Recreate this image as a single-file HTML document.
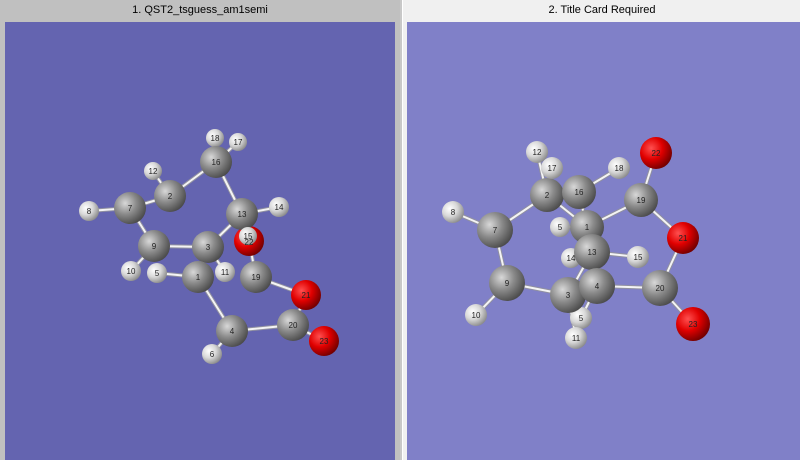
<!DOCTYPE html>
<html><head><meta charset="utf-8"><style>
body{margin:0;width:800px;height:460px;overflow:hidden;background:#c8c8c8;font-family:"Liberation Sans",sans-serif}
#l{position:absolute;left:0;top:0;width:400px;height:460px;background:#c0c0c0}
#r{position:absolute;left:402px;top:0;width:398px;height:460px;background:#f0f0f0;border-left:1px solid #fff}
.t{position:absolute;top:4px;left:0;right:0;text-align:center;font-size:11px;color:#000}
svg{position:absolute;left:0;top:0}
</style></head><body>
<div id="l"><div class="t">1. QST2_tsguess_am1semi</div></div>
<div id="r"><div class="t">2. Title Card Required</div></div>
<svg width="800" height="460" viewBox="0 0 800 460">
<defs>
<radialGradient id="C" cx="35%" cy="35%" r="70%"><stop offset="0" stop-color="#d8d8d8"/><stop offset=".5" stop-color="#8a8a8a"/><stop offset="1" stop-color="#4a4a4a"/></radialGradient>
<radialGradient id="H" cx="35%" cy="35%" r="70%"><stop offset="0" stop-color="#ffffff"/><stop offset=".5" stop-color="#d8d8d8"/><stop offset="1" stop-color="#8a8a8a"/></radialGradient>
<radialGradient id="O" cx="35%" cy="35%" r="70%"><stop offset="0" stop-color="#ff5050"/><stop offset=".5" stop-color="#e00000"/><stop offset="1" stop-color="#700000"/></radialGradient>
</defs>
<rect x="5" y="22" width="390" height="438" fill="#6464b0"/>
<rect x="407" y="22" width="393" height="438" fill="#8080c8"/>
<g stroke-linecap="round">
<g id="bl" stroke="#9090a0" stroke-width="4">
<path d="M216 162L215 138M216 162L238 142M216 162L170 196M216 162L242 214M153 171L170 196M170 196L130 208M130 208L89 211M130 208L154 246M154 246L208 247M154 246L131 271M208 247L242 214M208 247L225 272M242 214L279 207M242 214L248 237M249 241L256 277M256 277L306 295M306 295L293 325M293 325L324 341M293 325L232 331M232 331L198 277M232 331L212 354M198 277L157 273M198 277L208 247M656 153L641 200M641 200L683 238M683 238L660 288M660 288L693 324M660 288L597 286M597 286L568 295M568 295L507 283M507 283L495 230M495 230L547 195M495 230L453 212M507 283L476 315M547 195L537 152M547 195L552 168M547 195L579 192M579 192L619 168M579 192L592 252M587 227L641 200M587 227L560 227M587 227L547 195M592 252L571 258M592 252L638 257M592 252L568 295M568 295L576 338M597 286L581 318"/>
</g>
<g stroke="#f4f4f4" stroke-width="2">
<path d="M216 162L215 138M216 162L238 142M216 162L170 196M216 162L242 214M153 171L170 196M170 196L130 208M130 208L89 211M130 208L154 246M154 246L208 247M154 246L131 271M208 247L242 214M208 247L225 272M242 214L279 207M242 214L248 237M249 241L256 277M256 277L306 295M306 295L293 325M293 325L324 341M293 325L232 331M232 331L198 277M232 331L212 354M198 277L157 273M198 277L208 247M656 153L641 200M641 200L683 238M683 238L660 288M660 288L693 324M660 288L597 286M597 286L568 295M568 295L507 283M507 283L495 230M495 230L547 195M495 230L453 212M507 283L476 315M547 195L537 152M547 195L552 168M547 195L579 192M579 192L619 168M579 192L592 252M587 227L641 200M587 227L560 227M587 227L547 195M592 252L571 258M592 252L638 257M592 252L568 295M568 295L576 338M597 286L581 318"/>
</g>
</g>
<g font-size="8" fill="#222" text-anchor="middle" font-family="Liberation Sans,sans-serif">
<circle cx="215" cy="138" r="9" fill="url(#H)"/><text x="215" y="141">18</text>
<circle cx="238" cy="142" r="9" fill="url(#H)"/><text x="238" y="145">17</text>
<circle cx="216" cy="162" r="16" fill="url(#C)"/><text x="216" y="165">16</text>
<circle cx="153" cy="171" r="9" fill="url(#H)"/><text x="153" y="174">12</text>
<circle cx="170" cy="196" r="16" fill="url(#C)"/><text x="170" y="199">2</text>
<circle cx="130" cy="208" r="16" fill="url(#C)"/><text x="130" y="211">7</text>
<circle cx="89" cy="211" r="10" fill="url(#H)"/><text x="89" y="214">8</text>
<circle cx="279" cy="207" r="10" fill="url(#H)"/><text x="279" y="210">14</text>
<circle cx="249" cy="241" r="15" fill="url(#O)"/>
<circle cx="242" cy="214" r="16" fill="url(#C)"/><text x="242" y="217">13</text>
<circle cx="248" cy="236" r="9" fill="url(#H)"/><text x="248" y="239">15</text><text x="249" y="245">22</text>
<circle cx="154" cy="246" r="16" fill="url(#C)"/><text x="154" y="249">9</text>
<circle cx="208" cy="247" r="16" fill="url(#C)"/><text x="208" y="250">3</text>
<circle cx="131" cy="271" r="10" fill="url(#H)"/><text x="131" y="274">10</text>
<circle cx="157" cy="273" r="10" fill="url(#H)"/><text x="157" y="276">5</text>
<circle cx="198" cy="277" r="16" fill="url(#C)"/><text x="198" y="280">1</text>
<circle cx="225" cy="272" r="10" fill="url(#H)"/><text x="225" y="275">11</text>
<circle cx="256" cy="277" r="16" fill="url(#C)"/><text x="256" y="280">19</text>
<circle cx="306" cy="295" r="15" fill="url(#O)"/><text x="306" y="298">21</text>
<circle cx="293" cy="325" r="16" fill="url(#C)"/><text x="293" y="328">20</text>
<circle cx="232" cy="331" r="16" fill="url(#C)"/><text x="232" y="334">4</text>
<circle cx="324" cy="341" r="15" fill="url(#O)"/><text x="324" y="344">23</text>
<circle cx="212" cy="354" r="10" fill="url(#H)"/><text x="212" y="357">6</text>

<circle cx="656" cy="153" r="16" fill="url(#O)"/><text x="656" y="156">22</text>
<circle cx="537" cy="152" r="11" fill="url(#H)"/><text x="537" y="155">12</text>
<circle cx="547" cy="195" r="17" fill="url(#C)"/><text x="547" y="198">2</text>
<circle cx="552" cy="168" r="11" fill="url(#H)"/><text x="552" y="171">17</text>
<circle cx="619" cy="168" r="11" fill="url(#H)"/><text x="619" y="171">18</text>
<circle cx="641" cy="200" r="17" fill="url(#C)"/><text x="641" y="203">19</text>
<circle cx="453" cy="212" r="11" fill="url(#H)"/><text x="453" y="215">8</text>
<circle cx="495" cy="230" r="18" fill="url(#C)"/><text x="495" y="233">7</text>
<circle cx="560" cy="227" r="10" fill="url(#H)"/><text x="560" y="230">5</text>
<circle cx="587" cy="227" r="17" fill="url(#C)"/><text x="587" y="230">1</text>
<circle cx="579" cy="192" r="17" fill="url(#C)"/><text x="579" y="195">16</text>
<circle cx="683" cy="238" r="16" fill="url(#O)"/><text x="683" y="241">21</text>
<circle cx="571" cy="258" r="10" fill="url(#H)"/><text x="571" y="261">14</text>
<circle cx="638" cy="257" r="11" fill="url(#H)"/><text x="638" y="260">15</text>
<circle cx="592" cy="252" r="18" fill="url(#C)"/><text x="592" y="255">13</text>
<circle cx="507" cy="283" r="18" fill="url(#C)"/><text x="507" y="286">9</text>
<circle cx="660" cy="288" r="18" fill="url(#C)"/><text x="660" y="291">20</text>
<circle cx="581" cy="318" r="11" fill="url(#H)"/><text x="581" y="321">5</text>
<circle cx="568" cy="295" r="18" fill="url(#C)"/><text x="568" y="298">3</text>
<circle cx="597" cy="286" r="18" fill="url(#C)"/><text x="597" y="289">4</text>
<circle cx="476" cy="315" r="11" fill="url(#H)"/><text x="476" y="318">10</text>
<circle cx="693" cy="324" r="17" fill="url(#O)"/><text x="693" y="327">23</text>
<circle cx="576" cy="338" r="11" fill="url(#H)"/><text x="576" y="341">11</text>
</g>
</svg>
</body></html>
